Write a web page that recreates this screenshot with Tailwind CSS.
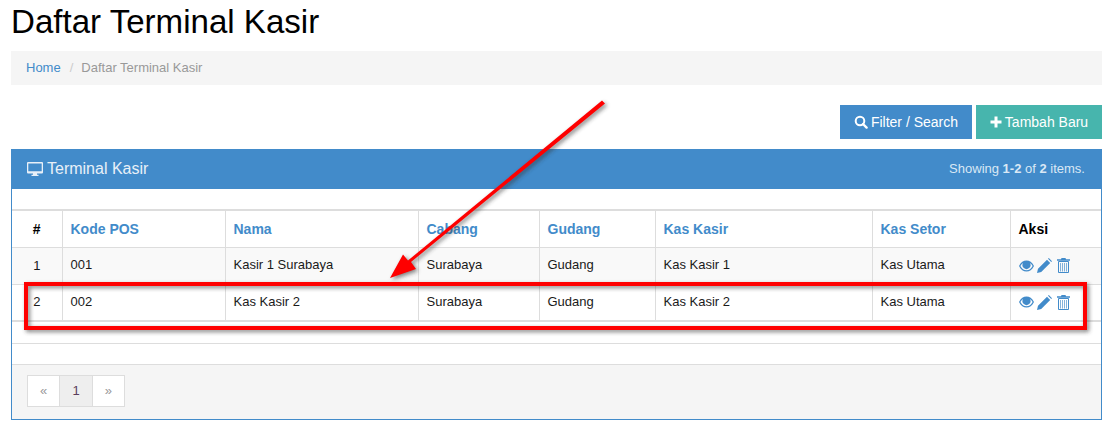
<!DOCTYPE html>
<html><head><meta charset="utf-8"><script src="https://cdn.jsdelivr.net/npm/@tailwindcss/browser@4"></script></head>
<body class="bg-white overflow-hidden font-['Liberation_Sans',Arial,sans-serif] text-[13px] leading-[18px] text-[#1a1a1a]">
<div class="relative w-[1112px] h-[429px] overflow-hidden">
<div class="pl-[11px] pr-[10px]">
  <h1 class="text-[33.100px] leading-[40px] h-[51px] pt-[2px] text-black font-normal">Daftar Terminal Kasir</h1>
  <div class="h-[34px] bg-[#f5f5f5] pl-[15px] flex items-center text-[13px]">
    <span class="text-[#428bca]">Home</span><span class="text-[#cccccc] ml-[9px]">/</span><span class="text-[#999999] ml-[8px]">Daftar Terminal Kasir</span>
  </div>
  <div class="flex justify-end gap-[4px] mt-[20px] h-[34px] text-[14px]">
    <div class="w-[132px] bg-[#428bca] text-white flex items-center justify-center gap-[3px]">
      <svg width="14" height="14" viewBox="0 0 14 14"><circle cx="6" cy="6" r="4.300" fill="none" stroke="#fff" stroke-width="2"/><path d="M9 9l3.600 3.600" stroke="#fff" stroke-width="2.400" stroke-linecap="round"/></svg>
      <span>Filter / Search</span></div>
    <div class="w-[126px] bg-[#47b5ad] text-white flex items-center justify-center gap-[3px]">
      <svg width="12" height="12" viewBox="0 0 12 12"><path d="M6 .5v11M.5 6h11" stroke="#fff" stroke-width="3"/></svg>
      <span>Tambah Baru</span></div>
  </div>
  <div class="mt-[10px] h-[271px] border border-[#428bca] border-t-0 flex flex-col">
    <div class="h-[40px] -mx-px bg-[#428bca] flex items-center justify-between pl-[16px] pr-[17px]">
      <div class="flex items-center gap-[4px] text-[16px] text-[#e8f0f8]">
        <svg width="16" height="14" viewBox="0 0 16 14"><path fill="#e8f0f8" fill-rule="evenodd" d="M1 0h14a1 1 0 0 1 1 1v9.500a1 1 0 0 1-1 1H10v1.200h1.500V14h-7v-1.300H6v-1.200H1a1 1 0 0 1-1-1V1a1 1 0 0 1 1-1zm.3 1.400v7.900h13.400V1.400z"/></svg>
        <span>Terminal Kasir</span></div>
      <div class="text-[13px] text-[#d9e8f5]">Showing <b>1-2</b> of <b>2</b> items.</div>
    </div>
    <div class="h-[20px]"></div>
    <table class="w-[1089px] table-fixed border-collapse text-[13px]">
      <colgroup><col class="w-[50px]"><col class="w-[163px]"><col class="w-[193px]"><col class="w-[121px]"><col class="w-[116px]"><col class="w-[217px]"><col class="w-[138px]"><col class="w-[91px]"></colgroup>
      <thead><tr class="h-[37px] border-t-2 border-b border-[#dddddd] font-bold text-[#428bca] text-[14px]">
        <th class="text-black text-center font-bold border-r border-[#dddddd]">#</th>
        <th class="text-left pl-[8px] border-r border-[#dddddd]">Kode POS</th><th class="text-left pl-[8px] border-r border-[#dddddd]">Nama</th><th class="text-left pl-[8px] border-r border-[#dddddd]">Cabang</th><th class="text-left pl-[8px] border-r border-[#dddddd]">Gudang</th><th class="text-left pl-[8px] border-r border-[#dddddd]">Kas Kasir</th><th class="text-left pl-[8px] border-r border-[#dddddd]">Kas Setor</th><th class="text-left pl-[8px] text-black">Aksi</th></tr></thead>
      <tbody>
      <tr class="h-[37px] bg-[#f9f9f9] border-b border-[#dddddd]">
        <td class="text-center border-r border-[#dddddd]">1</td><td class="pb-[2px] pl-[8px] border-r border-[#dddddd]">001</td><td class="pb-[2px] pl-[8px] border-r border-[#dddddd]">Kasir 1 Surabaya</td><td class="pb-[2px] pl-[8px] border-r border-[#dddddd]">Surabaya</td><td class="pb-[2px] pl-[8px] border-r border-[#dddddd]">Gudang</td><td class="pb-[2px] pl-[8px] border-r border-[#dddddd]">Kas Kasir 1</td><td class="pb-[2px] pl-[8px] border-r border-[#dddddd]">Kas Utama</td>
        <td class="pl-[8px]"><div class="flex items-center">
          <svg width="15" height="12" viewBox="0 0 15 12"><path fill="#428bca" fill-rule="evenodd" d="M0 6C1.800 2.300 4.500.5 7.500.5S13.200 2.300 15 6c-1.800 3.700-4.500 5.500-7.500 5.500S1.800 9.700 0 6zm1.400 0c1.400 2.700 3.500 4.300 6.100 4.300s4.700-1.600 6.100-4.300c-.7-1.300-1.600-2.400-2.700-3.100a4 4 0 1 1-6.800 0C3 3.600 2.100 4.700 1.400 6z"/></svg>
          <svg class="ml-[3px]" width="15" height="15" viewBox="0 0 15 15"><path fill="#428bca" d="M0 15l1-4.200L10 1.800l3.200 3.200-9 9zM11 .8l.8-.8L15 3.200l-.8.8z"/></svg>
          <svg class="ml-[5px]" width="13" height="15" viewBox="0 0 13 15"><path fill="#428bca" d="M4.500 0h4l.5 1.300h4v1.400H0V1.300h4z"/><path fill="none" stroke="#428bca" d="M1.500 3.500h10v11h-10z"/><path stroke="#428bca" stroke-opacity=".65" d="M3.500 5v8.500M5.500 5v8.500M7.500 5v8.500M9.500 5v8.500"/></svg>
        </div></td></tr>
      <tr class="h-[37px] border-b-2 border-[#dddddd]">
        <td class="text-center border-r border-[#dddddd]">2</td><td class="pl-[8px] border-r border-[#dddddd]">002</td><td class="pl-[8px] border-r border-[#dddddd]">Kas Kasir 2</td><td class="pl-[8px] border-r border-[#dddddd]">Surabaya</td><td class="pl-[8px] border-r border-[#dddddd]">Gudang</td><td class="pl-[8px] border-r border-[#dddddd]">Kas Kasir 2</td><td class="pl-[8px] border-r border-[#dddddd]">Kas Utama</td>
        <td class="pl-[8px]"><div class="flex items-center">
          <svg width="15" height="12" viewBox="0 0 15 12"><path fill="#428bca" fill-rule="evenodd" d="M0 6C1.800 2.300 4.500.5 7.500.5S13.200 2.300 15 6c-1.800 3.700-4.500 5.500-7.500 5.500S1.800 9.700 0 6zm1.400 0c1.400 2.700 3.500 4.300 6.100 4.300s4.700-1.600 6.100-4.300c-.7-1.300-1.600-2.400-2.700-3.100a4 4 0 1 1-6.800 0C3 3.600 2.100 4.700 1.400 6z"/></svg>
          <svg class="ml-[3px]" width="15" height="15" viewBox="0 0 15 15"><path fill="#428bca" d="M0 15l1-4.200L10 1.800l3.200 3.200-9 9zM11 .8l.8-.8L15 3.200l-.8.8z"/></svg>
          <svg class="ml-[5px]" width="13" height="15" viewBox="0 0 13 15"><path fill="#428bca" d="M4.500 0h4l.5 1.300h4v1.400H0V1.300h4z"/><path fill="none" stroke="#428bca" d="M1.500 3.500h10v11h-10z"/><path stroke="#428bca" stroke-opacity=".65" d="M3.500 5v8.500M5.500 5v8.500M7.500 5v8.500M9.500 5v8.500"/></svg>
        </div></td></tr>
      </tbody>
    </table>
    <div class="h-[22px] border-b border-[#dddddd]"></div>
    <div class="h-[20px]"></div>
    <div class="flex-1 bg-[#f5f5f5] border-t border-[#dddddd] pt-[10px] pl-[15px]">
      <div class="flex w-[98px] h-[32px] border border-[#dddddd] bg-white text-center leading-[29px]">
        <span class="flex-1 text-[#999999]">«</span><span class="flex-1 bg-[#eeeeee] border-x border-[#dddddd] text-[#5a3d5c]">1</span><span class="flex-1 text-[#999999]">»</span>
      </div>
    </div>
  </div>
</div>
<svg class="absolute left-0 top-0 pointer-events-none" width="1112" height="429" viewBox="0 0 1112 429">
  <defs><filter id="b" x="-5%" y="-20%" width="110%" height="140%"><feGaussianBlur stdDeviation="2"/></filter></defs>
  <g opacity=".6" transform="translate(2 2)" filter="url(#b)">
    <path fill="#333" d="M602 100.500l3 3L411 262l5 7-26 9 13-23.500 5 6z"/>
    <rect x="26" y="284" width="1059" height="44" fill="none" stroke="#333" stroke-width="4"/>
  </g>
  <path fill="#fe0000" d="M602 100.500l3 3L411 262l5 7-26 9 13-23.500 5 6z"/>
  <rect x="26" y="284" width="1059" height="44" fill="none" stroke="#fe0000" stroke-width="4"/>
</svg>
</div>
</body></html>
